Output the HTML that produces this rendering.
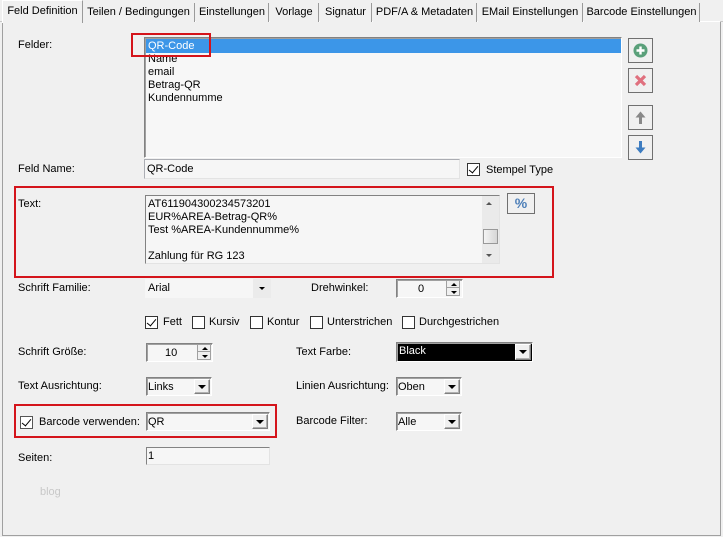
<!DOCTYPE html>
<html><head><meta charset="utf-8"><style>
*{box-sizing:border-box;margin:0;padding:0}
body{width:723px;height:537px;background:#f0f0f0;font-family:"Liberation Sans",Arial,sans-serif;font-size:11px;color:#000;position:relative;overflow:hidden}
.a{position:absolute;white-space:nowrap}
.lbl{position:absolute;white-space:nowrap;line-height:13px}
.tab{position:absolute;top:3px;height:19px;background:#f0f0f0;padding-top:3px;text-align:center;border-right:1px solid #9a9a9a}
.box3d{position:absolute;border:1px solid;border-color:#828282 #fff #fff #828282;box-shadow:inset 1px 1px 0 #a0a0a0;background:#f6f6f6}
.flat{position:absolute;background:#f6f6f6;border:1px solid #e4e4e4}
.dd{position:absolute;width:16px;border:1px solid;border-color:#fff #808080 #808080 #fff;background:#f0f0f0;box-shadow:inset -1px -1px 0 #b0b0b0}
.dd:after{content:"";position:absolute;left:3px;top:50%;margin-top:-2px;border-left:4px solid transparent;border-right:4px solid transparent;border-top:4px solid #000}
.cb{position:absolute;width:13px;height:13px;border:1px solid #333;background:#fff}
.chk:after{content:"";position:absolute;left:3px;top:0px;width:4px;height:8px;border:solid #000;border-width:0 1.6px 1.6px 0;transform:rotate(40deg)}
.red{position:absolute;border:2px solid #d4141b}
.btn{position:absolute;width:25px;height:25px;border:1px solid #707070;background:#f0f0f0}
.spin{position:absolute;width:14px;border:1px solid #a0a0a0;background:#f0f0f0}
.spin div{height:50%;position:relative;border-bottom:1px solid #a0a0a0}
.spin div:last-child{border:0}
.up:after{content:"";position:absolute;left:4px;top:2px;border-left:3px solid transparent;border-right:3px solid transparent;border-bottom:3px solid #000}
.dn:after{content:"";position:absolute;left:4px;top:3px;border-left:3px solid transparent;border-right:3px solid transparent;border-top:3px solid #000}
</style></head><body>
<div class="a" style="left:0;top:21px;width:723px;height:1px;background:#c8c8c8"></div>
<div class="a" style="left:2px;top:21px;width:719px;height:515px;border:1px solid #a0a0a0;border-top:1px solid #fff;background:#f0f0f0"></div>
<div class="tab" style="left:2px;top:0;height:23px;width:81px;padding-top:4px;border-right:1px solid #9a9a9a;border-left:1px solid #fff;border-top:1px solid #fff">Feld Definition</div>
<div class="tab" style="left:83px;width:112px">Teilen / Bedingungen</div>
<div class="tab" style="left:196px;width:73px">Einstellungen</div>
<div class="tab" style="left:270px;width:49px">Vorlage</div>
<div class="tab" style="left:320px;width:52px">Signatur</div>
<div class="tab" style="left:373px;width:104px">PDF/A &amp; Metadaten</div>
<div class="tab" style="left:478px;width:105px">EMail Einstellungen</div>
<div class="tab" style="left:584px;width:116px">Barcode Einstellungen</div>

<div class="lbl" style="left:18px;top:39px">Felder:</div>
<div class="box3d" style="left:144px;top:37px;width:478px;height:121px;background:#f7f7f7"></div>
<div class="a" style="left:146px;top:39px;width:475px;height:14px;background:#3c96e8"></div>
<div class="lbl" style="left:148px;top:40px;color:#fff">QR-Code</div>
<div class="lbl" style="left:148px;top:53px">Name</div>
<div class="lbl" style="left:148px;top:66px">email</div>
<div class="lbl" style="left:148px;top:79px">Betrag-QR</div>
<div class="lbl" style="left:148px;top:92px">Kundennumme</div>
<div class="red" style="left:131px;top:33px;width:80px;height:24px"></div>

<div class="btn" style="left:628px;top:38px"><svg width="23" height="23"><circle cx="11.5" cy="11.5" r="7" fill="#5aa07a"/><path d="M11.5 7.5v8M7.5 11.5h8" stroke="#fff" stroke-width="2.4"/></svg></div>
<div class="btn" style="left:628px;top:68px"><svg width="23" height="23"><path d="M7 7l9 9M16 7l-9 9" stroke="#e0707e" stroke-width="3.2"/></svg></div>
<div class="btn" style="left:628px;top:105px"><svg width="23" height="23"><path d="M11.5 18V9" stroke="#888" stroke-width="3"/><path d="M6.5 11.5l5-6 5 6z" fill="#888"/></svg></div>
<div class="btn" style="left:628px;top:135px"><svg width="23" height="23"><path d="M11.5 5v9" stroke="#3d7cc0" stroke-width="3"/><path d="M6.5 11.5l5 6 5-6z" fill="#3d7cc0"/></svg></div>

<div class="lbl" style="left:18px;top:163px">Feld Name:</div>
<div class="box3d" style="left:144px;top:159px;width:316px;height:20px;box-shadow:none;border-color:#abadb3 #e3e3e3 #e3e3e3 #abadb3"></div>
<div class="lbl" style="left:147px;top:163px">QR-Code</div>
<div class="cb chk" style="left:467px;top:163px"></div>
<div class="lbl" style="left:486px;top:164px">Stempel Type</div>

<div class="lbl" style="left:18px;top:198px">Text:</div>
<div class="box3d" style="left:145px;top:195px;width:355px;height:69px;box-shadow:none;border-color:#828282 #e3e3e3 #e3e3e3 #828282"></div>
<div class="lbl" style="left:148px;top:198px">AT611904300234573201</div>
<div class="lbl" style="left:148px;top:211px">EUR%AREA-Betrag-QR%</div>
<div class="lbl" style="left:148px;top:224px">Test %AREA-Kundennumme%</div>
<div class="lbl" style="left:148px;top:250px">Zahlung für RG 123</div>
<div class="a" style="left:482px;top:196px;width:17px;height:67px;background:#eaeaea"></div>
<div class="a" style="left:486px;top:202px;border-left:3px solid transparent;border-right:3px solid transparent;border-bottom:3px solid #555"></div>
<div class="a" style="left:486px;top:254px;border-left:3px solid transparent;border-right:3px solid transparent;border-top:3px solid #555"></div>
<div class="a" style="left:483px;top:229px;width:15px;height:15px;border:1px solid #999;background:linear-gradient(90deg,#f4f4f4,#d6d6d6)"></div>
<div class="btn" style="left:507px;top:193px;width:28px;height:21px;text-align:center;font-size:14px;font-weight:bold;color:#4d7fb8;line-height:18px">%</div>
<div class="red" style="left:14px;top:186px;width:540px;height:92px"></div>

<div class="lbl" style="left:18px;top:282px">Schrift Familie:</div>
<div class="flat" style="left:145px;top:279px;width:126px;height:19px;border:0;background:#f6f6f6"></div>
<div class="a" style="left:253px;top:279px;width:18px;height:19px;background:#ebebeb"></div>
<div class="a" style="left:259px;top:287px;border-left:3px solid transparent;border-right:3px solid transparent;border-top:3px solid #000"></div>
<div class="lbl" style="left:148px;top:282px">Arial</div>
<div class="lbl" style="left:311px;top:282px">Drehwinkel:</div>
<div class="box3d" style="left:396px;top:279px;width:67px;height:19px"></div>
<div class="lbl" style="left:418px;top:283px">0</div>
<div class="spin" style="left:446px;top:280px;height:16px"><div class="up"></div><div class="dn"></div></div>

<div class="cb chk" style="left:145px;top:316px"></div><div class="lbl" style="left:163px;top:316px">Fett</div>
<div class="cb" style="left:192px;top:316px"></div><div class="lbl" style="left:209px;top:316px">Kursiv</div>
<div class="cb" style="left:250px;top:316px"></div><div class="lbl" style="left:267px;top:316px">Kontur</div>
<div class="cb" style="left:310px;top:316px"></div><div class="lbl" style="left:327px;top:316px">Unterstrichen</div>
<div class="cb" style="left:402px;top:316px"></div><div class="lbl" style="left:419px;top:316px">Durchgestrichen</div>

<div class="lbl" style="left:18px;top:346px">Schrift Größe:</div>
<div class="box3d" style="left:146px;top:343px;width:67px;height:19px"></div>
<div class="lbl" style="left:165px;top:347px">10</div>
<div class="spin" style="left:197px;top:344px;height:16px"><div class="up"></div><div class="dn"></div></div>
<div class="lbl" style="left:296px;top:346px">Text Farbe:</div>
<div class="box3d" style="left:396px;top:342px;width:137px;height:20px;background:#000"></div>
<div class="lbl" style="left:399px;top:345px;color:#fff">Black</div>
<div class="dd" style="left:515px;top:344px;height:16px"></div>

<div class="lbl" style="left:18px;top:380px">Text Ausrichtung:</div>
<div class="box3d" style="left:146px;top:377px;width:66px;height:19px"></div>
<div class="lbl" style="left:148px;top:381px">Links</div>
<div class="dd" style="left:194px;top:379px;height:15px"></div>
<div class="lbl" style="left:296px;top:380px">Linien Ausrichtung:</div>
<div class="box3d" style="left:396px;top:377px;width:66px;height:19px"></div>
<div class="lbl" style="left:398px;top:381px">Oben</div>
<div class="dd" style="left:444px;top:379px;height:15px"></div>

<div class="cb chk" style="left:20px;top:416px;border-color:#555;background:#fff"></div>
<div class="lbl" style="left:39px;top:416px">Barcode verwenden:</div>
<div class="box3d" style="left:146px;top:412px;width:124px;height:19px"></div>
<div class="lbl" style="left:148px;top:416px">QR</div>
<div class="dd" style="left:252px;top:414px;height:15px"></div>
<div class="red" style="left:14px;top:404px;width:263px;height:34px"></div>
<div class="lbl" style="left:296px;top:415px">Barcode Filter:</div>
<div class="box3d" style="left:396px;top:412px;width:66px;height:19px"></div>
<div class="lbl" style="left:398px;top:416px">Alle</div>
<div class="dd" style="left:444px;top:414px;height:15px"></div>

<div class="lbl" style="left:18px;top:452px">Seiten:</div>
<div class="box3d" style="left:146px;top:447px;width:124px;height:18px;box-shadow:none;border-color:#828282 #e3e3e3 #e3e3e3 #828282"></div>
<div class="lbl" style="left:148px;top:450px">1</div>

<div class="lbl" style="left:40px;top:486px;color:#c8c8c8">blog</div>
</body></html>
